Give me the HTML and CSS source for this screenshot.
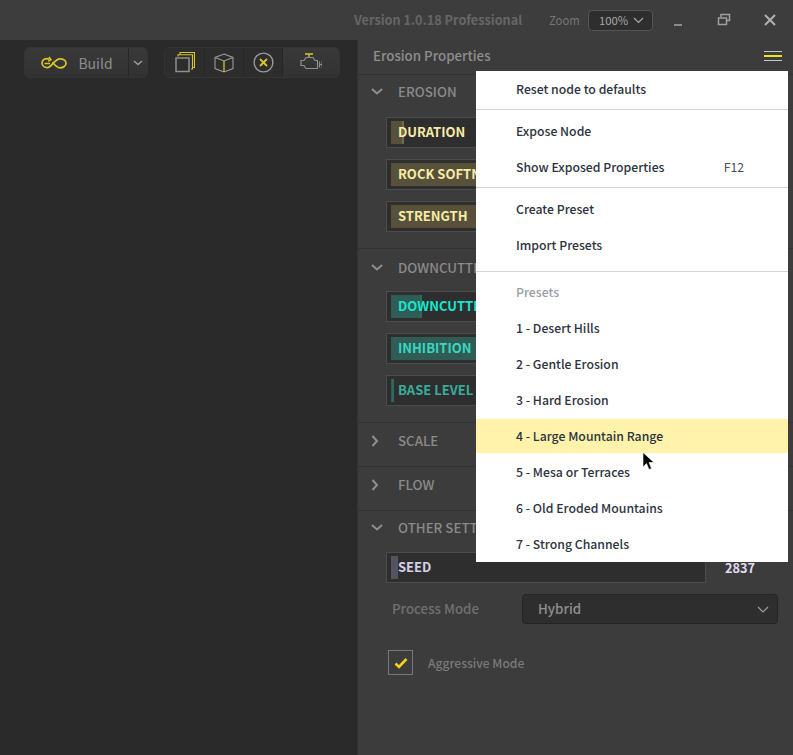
FILE: index.html
```html
<!DOCTYPE html>
<html lang="en">
<head>
    <meta charset="UTF-8">
    <title>Erosion Properties</title>
    <link rel="stylesheet" href="styles.css">
</head>
<body>

    <!-- title bar -->
    <div class="titlebar">
        <span class="version">Version 1.0.18 Professional</span>
        <span class="zoom-label">Zoom</span>
        <div class="zoom-select">100%
            <svg width="11" height="7" viewBox="0 0 11 7"><path d="M1 1l4.500 4.500L10 1" fill="none" stroke="#a8a8a8" stroke-width="1.200"/></svg>
        </div>
        <div class="win-btns">
            <svg width="14" height="14" viewBox="0 0 14 14"><path d="M3 12h8" stroke="#8c8c8c" stroke-width="2"/></svg>
            <svg width="14" height="14" viewBox="0 0 14 14"><path d="M4 4V1.500h8.500V7.500H10M1.500 5h8v6.500h-8z" fill="none" stroke="#a0a0a0" stroke-width="1.500"/></svg>
            <svg width="14" height="14" viewBox="0 0 14 14"><path d="M2 2l10 10M12 2L2 12" stroke="#b0b0b0" stroke-width="2"/></svg>
        </div>
    </div>

    <div class="main">
        <!-- left: toolbar over empty canvas -->
        <div class="canvas">
            <div class="toolbar">
                <div class="tool-group">
                    <div class="tool tool-build">
                        <svg width="26" height="13" viewBox="0 0 26 13"><path d="M8.500 3.500C4.500 1.500 1 3.800 1 7s3 5 6 4.500c4-.7 6.500-8.700 12-8.700 3.300 0 6 1.800 6 4.400s-2.700 4.600-6 4.600c-3.500 0-5.500-3.300-7.500-5.800" fill="none" stroke="#d8c62a" stroke-width="1.700"/><path d="M3.500 7.500h5.500M8 .8l2 3-3 1.500" fill="none" stroke="#d8c62a" stroke-width="1.500"/></svg>
                        <span>Build</span>
                    </div>
                    <div class="tool tool-arrow">
                        <svg width="10" height="6" viewBox="0 0 10 6"><path d="M1 1l4 3.500L9 1" fill="none" stroke="#9a9a9a" stroke-width="1.600"/></svg>
                    </div>
                </div>
                <div class="tool-group">
                    <div class="tool tool-icon dark">
                        <svg width="20" height="21" viewBox="0 0 20 21"><path d="M5 2.500V.5h14.500v15H18M3 4.500V2.800h14.500V17H16" fill="none" stroke="#d8c62a" stroke-width="1.100"/><rect x="1" y="6" width="13" height="13.500" fill="none" stroke="#8f8f8f" stroke-width="1.500"/></svg>
                    </div>
                    <div class="tool tool-icon dark">
                        <svg width="20" height="20" viewBox="0 0 20 20"><path d="M10 1l9 3.500v11L10 19l-9-3.500v-11z" fill="none" stroke="#9a9a9a" stroke-width="1.100"/><path d="M1 4.500L10 8l9-3.500" fill="none" stroke="#9a9a9a" stroke-width="1.100"/><path d="M10 8v11" stroke="#d8c62a" stroke-width="1.300"/></svg>
                    </div>
                    <div class="tool tool-icon dark">
                        <svg width="21" height="21" viewBox="0 0 21 21"><circle cx="10.500" cy="10.500" r="9.400" fill="none" stroke="#9a9a9a" stroke-width="1.400"/><path d="M7 7l7 7M14 7l-7 7" stroke="#d8c62a" stroke-width="1.800"/></svg>
                    </div>
                    <div class="tool tool-icon wide">
                        <svg width="22" height="19" viewBox="0 0 22 19"><path d="M5 1h8M9 1v3" stroke="#d8c62a" stroke-width="1.300" fill="none"/><path d="M6 4.500h7l2 3h2.500v8H6l-2-3H1v-5h3z" fill="none" stroke="#8f8f8f" stroke-width="1.200"/><path d="M19.500 8.500v6M19.500 11.500H22M22 8.500v6" fill="none" stroke="#8f8f8f" stroke-width="1"/></svg>
                    </div>
                </div>
            </div>
        </div>

        <!-- right: properties panel -->
        <div class="panel">
            <div class="panel-head">
                <span>Erosion Properties</span>
                <div class="burger"><i></i><i class="yellow"></i><i></i></div>
            </div>

            <div class="section">
                <div class="section-head"><svg class="chev" width="12" height="8" viewBox="0 0 12 8"><path d="M1 1l5 4.500L11 1" fill="none" stroke="#8f8f8f" stroke-width="2"/></svg>EROSION</div>
                <div class="slider yellow"><div class="fill" style="width: 13px"></div><label>DURATION</label></div>
                <div class="slider yellow"><div class="fill" style="width: 120px"></div><label>ROCK SOFTNESS</label></div>
                <div class="slider yellow"><div class="fill" style="width: 120px"></div><label>STRENGTH</label></div>
            </div>

            <div class="section low">
                <div class="section-head"><svg class="chev" width="12" height="8" viewBox="0 0 12 8"><path d="M1 1l5 4.500L11 1" fill="none" stroke="#8f8f8f" stroke-width="2"/></svg>DOWNCUTTING</div>
                <div class="slider teal bright"><div class="fill" style="width: 31px"></div><label>DOWNCUTTING</label></div>
                <div class="slider teal"><div class="fill" style="width: 120px"></div><label>INHIBITION</label></div>
                <div class="slider teal dim"><div class="fill" style="width: 3px"></div><label>BASE LEVEL</label></div>
            </div>

            <div class="section closed">
                <div class="section-head"><svg class="chev" width="8" height="12" viewBox="0 0 8 12"><path d="M1.500 1l4.500 5-4.500 5" fill="none" stroke="#8f8f8f" stroke-width="2"/></svg>SCALE</div>
            </div>
            <div class="section closed">
                <div class="section-head"><svg class="chev" width="8" height="12" viewBox="0 0 8 12"><path d="M1.500 1l4.500 5-4.500 5" fill="none" stroke="#8f8f8f" stroke-width="2"/></svg>FLOW</div>
            </div>

            <div class="section last">
                <div class="section-head"><svg class="chev" width="12" height="8" viewBox="0 0 12 8"><path d="M1 1l5 4.500L11 1" fill="none" stroke="#8f8f8f" stroke-width="2"/></svg>OTHER SETTINGS</div>
                <div class="seed-row">
                    <div class="slider seed"><div class="fill" style="width: 7px"></div><label>SEED</label></div>
                    <span class="seed-value">2837</span>
                </div>
                <div class="mode-row">
                    <span class="mode-label">Process Mode</span>
                    <div class="mode-select">Hybrid
                        <svg width="12" height="7" viewBox="0 0 12 7"><path d="M1 1l5 5 5-5" fill="none" stroke="#a0a0a0" stroke-width="1.200"/></svg>
                    </div>
                </div>
                <div class="check-row">
                    <div class="checkbox"><svg width="14" height="12" viewBox="0 0 14 12"><path d="M1.500 6.500l3.500 3.500 7.500-8" fill="none" stroke="#f2d21c" stroke-width="2.600"/></svg></div>
                    <span>Aggressive Mode</span>
                </div>
            </div>
        </div>
    </div>

    <!-- popup menu -->
    <div class="menu">
        <div class="item">Reset node to defaults</div>
        <div class="sep sep-a"></div>
        <div class="item">Expose Node</div>
        <div class="item">Show Exposed Properties<span class="key">F12</span></div>
        <div class="sep sep-a"></div>
        <div class="item">Create Preset</div>
        <div class="item">Import Presets</div>
        <div class="sep sep-b"></div>
        <div class="item muted">Presets</div>
        <div class="item">1 - Desert Hills</div>
        <div class="item">2 - Gentle Erosion</div>
        <div class="item">3 - Hard Erosion</div>
        <div class="item active">4 - Large Mountain Range</div>
        <div class="item">5 - Mesa or Terraces</div>
        <div class="item">6 - Old Eroded Mountains</div>
        <div class="item">7 - Strong Channels</div>
    </div>

    <svg class="cursor" width="13" height="19" viewBox="0 0 13 19"><path d="M1 0.500v14.500l3.500-3.500 2.500 6 2.500-1-2.500-6h5z" fill="#000" stroke="#fff" stroke-width=".6"/></svg>

</body>
</html>
```

FILE: styles.css
```css
* {
    box-sizing: border-box;
}
body {
    margin: 0;
    width: 793px;
    height: 755px;
    overflow: hidden;
    position: relative;
    background: #3c3c3c;
    font-family: "Noto Sans CJK SC", "Noto Sans", sans-serif;
    font-size: 13.300px;
    line-height: 18px;
    color: #8a8a8a;
}

/* title bar */
.titlebar {
    height: 40px;
    display: flex;
    align-items: center;
    padding-left: 354px;
    background: #3d3d3d;
}
.version {
    font-size: 12.700px;
    font-weight: 700;
    color: #666;
    width: 195px;
}
.zoom-label {
    width: 39px;
    font-size: 11.300px;
    color: #767676;
}
.zoom-select {
    width: 65px;
    height: 21px;
    display: flex;
    align-items: center;
    justify-content: space-between;
    padding: 0 8px 0 10px;
    background: #2e2e2e;
    border: 1px solid #555;
    border-radius: 4px;
    font-size: 11.300px;
    color: #a8a8a8;
}
.win-btns {
    display: flex;
    margin-left: 18px;
    gap: 32px;
}

.main {
    display: flex;
    height: 715px;
}

/* left side */
.canvas {
    width: 358px;
    background: #2a2a2a;
    padding: 7px 0 0 24px;
    border-right: 1px solid #333;
}
.toolbar {
    display: flex;
    gap: 16px;
}
.tool-group {
    display: flex;
    height: 31px;
    border-radius: 5px;
    overflow: hidden;
    border: 1px solid #343434;
}
.tool {
    display: flex;
    align-items: center;
    justify-content: center;
    background: linear-gradient(#393939, #323232);
    border-left: 1px solid #272727;
}
.tool:first-child {
    border-left: 0;
}
.tool-build {
    width: 103px;
    gap: 11px;
    padding-left: 1px;
    font-size: 14px;
    color: #8d8d8d;
}
.tool-arrow {
    width: 19px;
}
.tool-icon {
    width: 39px;
}
.tool-icon.dark {
    background: #2d2d2d;
}
.tool-icon.wide {
    width: 57px;
}

/* properties panel */
.panel {
    flex: 1;
    background: #3c3c3c;
}
.panel-head {
    height: 35px;
    display: flex;
    align-items: center;
    justify-content: space-between;
    padding: 0 11px 2px 15px;
    font-weight: 500;
    color: #8e8e8e;
    border-bottom: 1px solid #333;
}
.burger {
    width: 18px;
}
.burger i {
    display: block;
    height: 1px;
    margin: 3px 0;
    background: #c8c8c8;
}
.burger i.yellow {
    background: #f2e01c;
    height: 2px;
}

.section {
    height: 174px;
    border-bottom: 1px solid #333;
}
.section.closed {
    height: 44px;
}
.section.last {
    border-bottom: 0;
}
.section-head {
    height: 34px;
    display: flex;
    align-items: center;
    padding-left: 13px;
    font-weight: 500;
    color: #8a8a8a;
}
.section.low .section-head {
    padding-top: 3px;
}
.chev {
    width: 12px;
    margin-right: 15px;
}
.closed .section-head {
    height: 36px;
    padding-top: 0;
    padding-left: 11px;
}
.closed .chev {
    margin-right: 17px;
}

.slider {
    position: relative;
    width: 320px;
    height: 31px;
    margin: 8px 0 11px 28px;
    background: #2e2e2e;
    border: 1px solid #4c4c4c;
    overflow: hidden;
}
.slider .fill {
    position: absolute;
    left: 4px;
    top: 3px;
    bottom: 3px;
    border-right: 2px solid;
}
.slider label {
    position: absolute;
    left: 11px;
    top: 5px;
    font-size: 13px;
    font-weight: 700;
    white-space: nowrap;
}
.slider.yellow label {
    color: #f8eba6;
}
.slider.yellow .fill {
    background: #57513c;
    border-color: #6f6a52;
}
.slider.teal label {
    color: #3ad6c0;
}
.slider.teal .fill {
    background: #2f5c55;
    border-color: #2f6a60;
}
.slider.teal.bright label {
    color: #16e6d0;
}
.slider.teal.dim label {
    color: #38ac9c;
}

.seed-row {
    display: flex;
    align-items: center;
}
.slider.seed {
    margin: 7px 0 0 28px;
}
.slider.seed label {
    color: #d6cfe6;
}
.slider.seed .fill {
    background: #55535e;
    border-color: #55535e;
}
.seed-value {
    margin: 7px 0 0 19px;
    font-size: 12.700px;
    font-weight: 700;
    color: #e2dcf0;
}

.mode-row {
    display: flex;
    align-items: center;
    margin-top: 11px;
    padding-left: 34px;
}
.mode-label {
    width: 130px;
    font-weight: 500;
    color: #707070;
}
.mode-select {
    width: 256px;
    height: 30px;
    display: flex;
    align-items: center;
    justify-content: space-between;
    padding: 0 8px 0 15px;
    background: #2e2e2e;
    border: 1px solid #242424;
    border-radius: 4px;
    font-weight: 500;
    color: #8e8e8e;
}
.check-row {
    display: flex;
    align-items: center;
    margin-top: 26px;
    padding-left: 30px;
    font-size: 12.100px;
    font-weight: 500;
    color: #7a7a7a;
}
.checkbox {
    width: 25px;
    height: 25px;
    margin-right: 15px;
    display: flex;
    align-items: center;
    justify-content: center;
    border: 1px solid #777;
}

/* popup menu */
.menu {
    position: absolute;
    left: 476px;
    top: 71px;
    width: 312px;
    height: 491px;
    background: #fff;
    font-size: 12.250px;
    font-weight: 500;
    color: #2d3340;
}
.item {
    height: 36px;
    display: flex;
    align-items: center;
    justify-content: space-between;
    padding: 0 44px 0 40px;
}
.item.muted {
    color: #9a9ea6;
}
.item.active {
    height: 34px;
    margin: 1px 0;
    background: #fff3ab;
}
.key {
    font-weight: 400;
    color: #4a4f5a;
}
.sep {
    height: 1px;
    background: #d4d4d4;
}
.sep-a {
    margin: 2px 0 3px;
}
.sep-b {
    margin: 8px 0 2px;
}

.cursor {
    position: absolute;
    left: 642px;
    top: 452px;
}
```
